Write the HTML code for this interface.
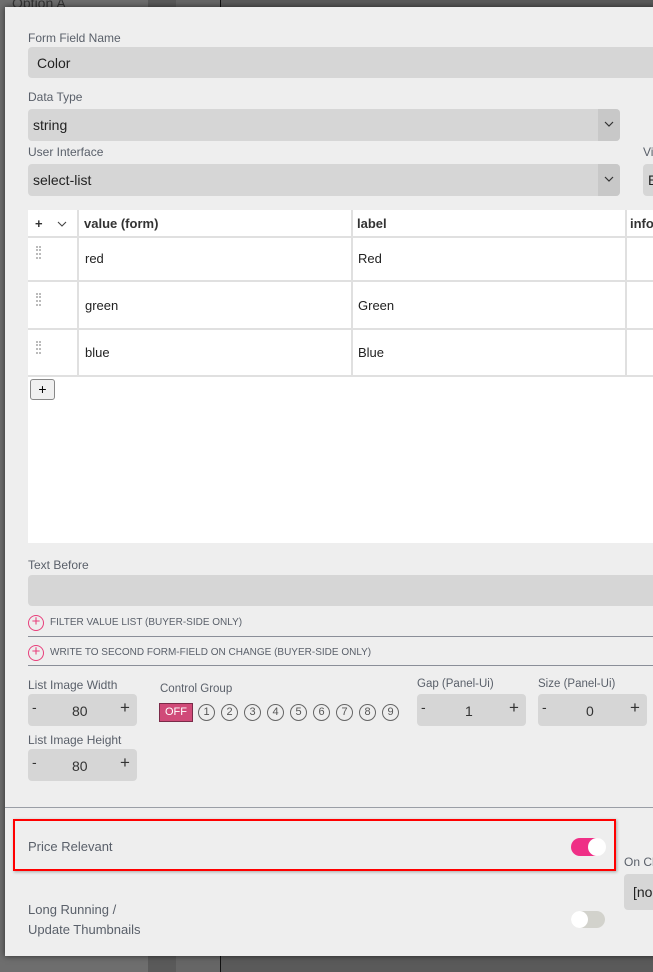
<!DOCTYPE html>
<html><head><meta charset="utf-8"><style>
*{box-sizing:border-box;margin:0;padding:0}
body{width:653px;height:972px;overflow:hidden;position:relative;background:#5a5a5a;font-family:"Liberation Sans",sans-serif}
.a{position:absolute}
.bgl{left:0;top:0;width:148px;height:972px;background:#6e6e6e}
.dlg{left:5px;top:7px;width:700px;height:949px;background:#eeeeee;box-shadow:0 0 6px rgba(0,0,0,.6)}
.lbl{font-size:12px;color:#5a606a;white-space:nowrap}
.inp{background:#d6d6d6;border-radius:4px;font-size:14px;color:#222;white-space:nowrap;overflow:hidden}
.arr{background:#c8c8c8;border-radius:0 4px 4px 0}
.cell{font-size:13px;color:#222}
.hd{font-size:13px;font-weight:bold;color:#333}
.hl{background:#e0e0e0}
.st{background:#d6d6d6;border-radius:4px}
.st span{position:absolute;font-size:14px;color:#333}
.c{width:17px;height:17px;border:1px solid #666;border-radius:50%;font-size:11px;color:#555;text-align:center;line-height:15px}
.pl{width:16px;height:16px;border:1.3px solid #e8407c;border-radius:50%;color:#e8407c;font-size:15px;line-height:12px;text-align:center}
.up{font-size:10px;color:#5a606a;white-space:nowrap}
</style></head><body>
<div class="a bgl"></div>
<div class="a" style="left:176px;top:0;width:45px;height:972px;background:#666"></div>
<div class="a" style="left:220px;top:0;width:1px;height:972px;background:#111"></div>
<div class="a" style="left:12px;top:-5px;font-size:14px;color:#333">Option A</div>
<div class="a dlg"></div>

<div class="a lbl" style="left:28px;top:31px">Form Field Name</div>
<div class="a inp" style="left:28px;top:47px;width:640px;height:31px;padding:8px 9px">Color</div>

<div class="a lbl" style="left:28px;top:90px">Data Type</div>
<div class="a inp" style="left:28px;top:109px;width:592px;height:32px;padding:8px 5px">string</div>
<div class="a arr" style="left:598px;top:109px;width:22px;height:32px"></div>
<svg class="a" style="left:604px;top:120px" width="10" height="8"><path d="M1 2 L5 6 L9 2" fill="none" stroke="#333" stroke-width="1.2"/></svg>

<div class="a lbl" style="left:28px;top:145px">User Interface</div>
<div class="a inp" style="left:28px;top:164px;width:592px;height:32px;padding:8px 5px">select-list</div>
<div class="a arr" style="left:598px;top:164px;width:22px;height:32px"></div>
<svg class="a" style="left:604px;top:175px" width="10" height="8"><path d="M1 2 L5 6 L9 2" fill="none" stroke="#333" stroke-width="1.2"/></svg>
<div class="a lbl" style="left:643px;top:145px">Vi</div>
<div class="a inp" style="left:643px;top:164px;width:30px;height:32px;padding:8px 5px">E</div>

<div class="a" style="left:28px;top:210px;width:640px;height:333px;background:#fff"></div>
<div class="a hl" style="left:28px;top:236px;width:640px;height:2px"></div>
<div class="a hl" style="left:28px;top:280px;width:640px;height:2px"></div>
<div class="a hl" style="left:28px;top:328px;width:640px;height:2px"></div>
<div class="a hl" style="left:28px;top:375px;width:640px;height:2px"></div>
<div class="a hl" style="left:77px;top:210px;width:2px;height:167px"></div>
<div class="a hl" style="left:351px;top:210px;width:2px;height:167px"></div>
<div class="a hl" style="left:625px;top:210px;width:2px;height:167px"></div>
<div class="a hd" style="left:35px;top:216px">+</div>
<svg class="a" style="left:57px;top:220px" width="10" height="8"><path d="M1 2 L5 6 L9 2" fill="none" stroke="#444" stroke-width="1.1"/></svg>
<div class="a hd" style="left:84px;top:216px">value (form)</div>
<div class="a hd" style="left:357px;top:216px">label</div>
<div class="a hd" style="left:630px;top:216px">info</div>
<div class="a" style="left:36px;top:246px;width:5px;height:13px;border-left:2px dotted #bbb;border-right:2px dotted #bbb"></div>
<div class="a" style="left:36px;top:293px;width:5px;height:13px;border-left:2px dotted #bbb;border-right:2px dotted #bbb"></div>
<div class="a" style="left:36px;top:341px;width:5px;height:13px;border-left:2px dotted #bbb;border-right:2px dotted #bbb"></div>
<div class="a cell" style="left:85px;top:251px">red</div>
<div class="a cell" style="left:358px;top:251px">Red</div>
<div class="a cell" style="left:85px;top:298px">green</div>
<div class="a cell" style="left:358px;top:298px">Green</div>
<div class="a cell" style="left:85px;top:345px">blue</div>
<div class="a cell" style="left:358px;top:345px">Blue</div>
<div class="a" style="left:30px;top:379px;width:25px;height:21px;border:1px solid #888;border-radius:3px;background:#f0f0f0;font-size:14px;text-align:center;line-height:18px">+</div>

<div class="a lbl" style="left:28px;top:558px">Text Before</div>
<div class="a inp" style="left:28px;top:575px;width:640px;height:31px"></div>

<div class="a pl" style="left:28px;top:615px">+</div>
<div class="a up" style="left:50px;top:617px">FILTER VALUE LIST (BUYER-SIDE ONLY)</div>
<div class="a" style="left:28px;top:636px;width:640px;height:1px;background:#8a8e98"></div>
<div class="a pl" style="left:28px;top:645px">+</div>
<div class="a up" style="left:50px;top:647px">WRITE TO SECOND FORM-FIELD ON CHANGE (BUYER-SIDE ONLY)</div>
<div class="a" style="left:28px;top:665px;width:640px;height:1px;background:#8a8e98"></div>

<div class="a lbl" style="left:28px;top:678px">List Image Width</div>
<div class="a st" style="left:28px;top:694px;width:109px;height:32px"><span style="left:4px;top:5px">-</span><span style="left:44px;top:9px">80</span><span style="left:92px;top:4px;font-size:17px">+</span></div>
<div class="a lbl" style="left:28px;top:733px">List Image Height</div>
<div class="a st" style="left:28px;top:749px;width:109px;height:32px"><span style="left:4px;top:5px">-</span><span style="left:44px;top:9px">80</span><span style="left:92px;top:4px;font-size:17px">+</span></div>

<div class="a lbl" style="left:160px;top:683px;font-size:11.5px">Control Group</div>
<div class="a" style="left:159px;top:703px;width:34px;height:19px;background:#d04a78;border:1px solid #7a2a48;color:#fff;font-size:11px;text-align:center;line-height:17px">OFF</div>
<div class="a c" style="left:198px;top:704px">1</div>
<div class="a c" style="left:221px;top:704px">2</div>
<div class="a c" style="left:244px;top:704px">3</div>
<div class="a c" style="left:267px;top:704px">4</div>
<div class="a c" style="left:290px;top:704px">5</div>
<div class="a c" style="left:313px;top:704px">6</div>
<div class="a c" style="left:336px;top:704px">7</div>
<div class="a c" style="left:359px;top:704px">8</div>
<div class="a c" style="left:382px;top:704px">9</div>

<div class="a lbl" style="left:417px;top:678px;font-size:11.5px">Gap (Panel-Ui)</div>
<div class="a st" style="left:417px;top:694px;width:109px;height:32px"><span style="left:4px;top:5px">-</span><span style="left:48px;top:9px">1</span><span style="left:92px;top:4px;font-size:17px">+</span></div>
<div class="a lbl" style="left:538px;top:678px;font-size:11.5px">Size (Panel-Ui)</div>
<div class="a st" style="left:538px;top:694px;width:109px;height:32px"><span style="left:4px;top:5px">-</span><span style="left:48px;top:9px">0</span><span style="left:92px;top:4px;font-size:17px">+</span></div>

<div class="a" style="left:5px;top:807px;width:660px;height:1px;background:#9a9ea6"></div>

<div class="a" style="left:13px;top:819px;width:603px;height:52px;border:2px solid #f00;box-shadow:1px 1px 3px rgba(0,0,0,.3)"></div>
<div class="a lbl" style="left:28px;top:839px;font-size:13px">Price Relevant</div>
<div class="a" style="left:571px;top:838px;width:34px;height:18px;border-radius:9px;background:#ef2f86"></div>
<div class="a" style="left:588px;top:838px;width:18px;height:18px;border-radius:50%;background:#fff"></div>

<div class="a lbl" style="left:624px;top:855px">On Ch</div>
<div class="a inp" style="left:624px;top:874px;width:40px;height:36px;padding:10px 9px">[no</div>

<div class="a lbl" style="left:28px;top:900px;font-size:13px;line-height:20px">Long Running /<br>Update Thumbnails</div>
<div class="a" style="left:571px;top:911px;width:34px;height:17px;border-radius:9px;background:#d2d2cc"></div>
<div class="a" style="left:571px;top:911px;width:17px;height:17px;border-radius:50%;background:#fff"></div>
</body></html>
